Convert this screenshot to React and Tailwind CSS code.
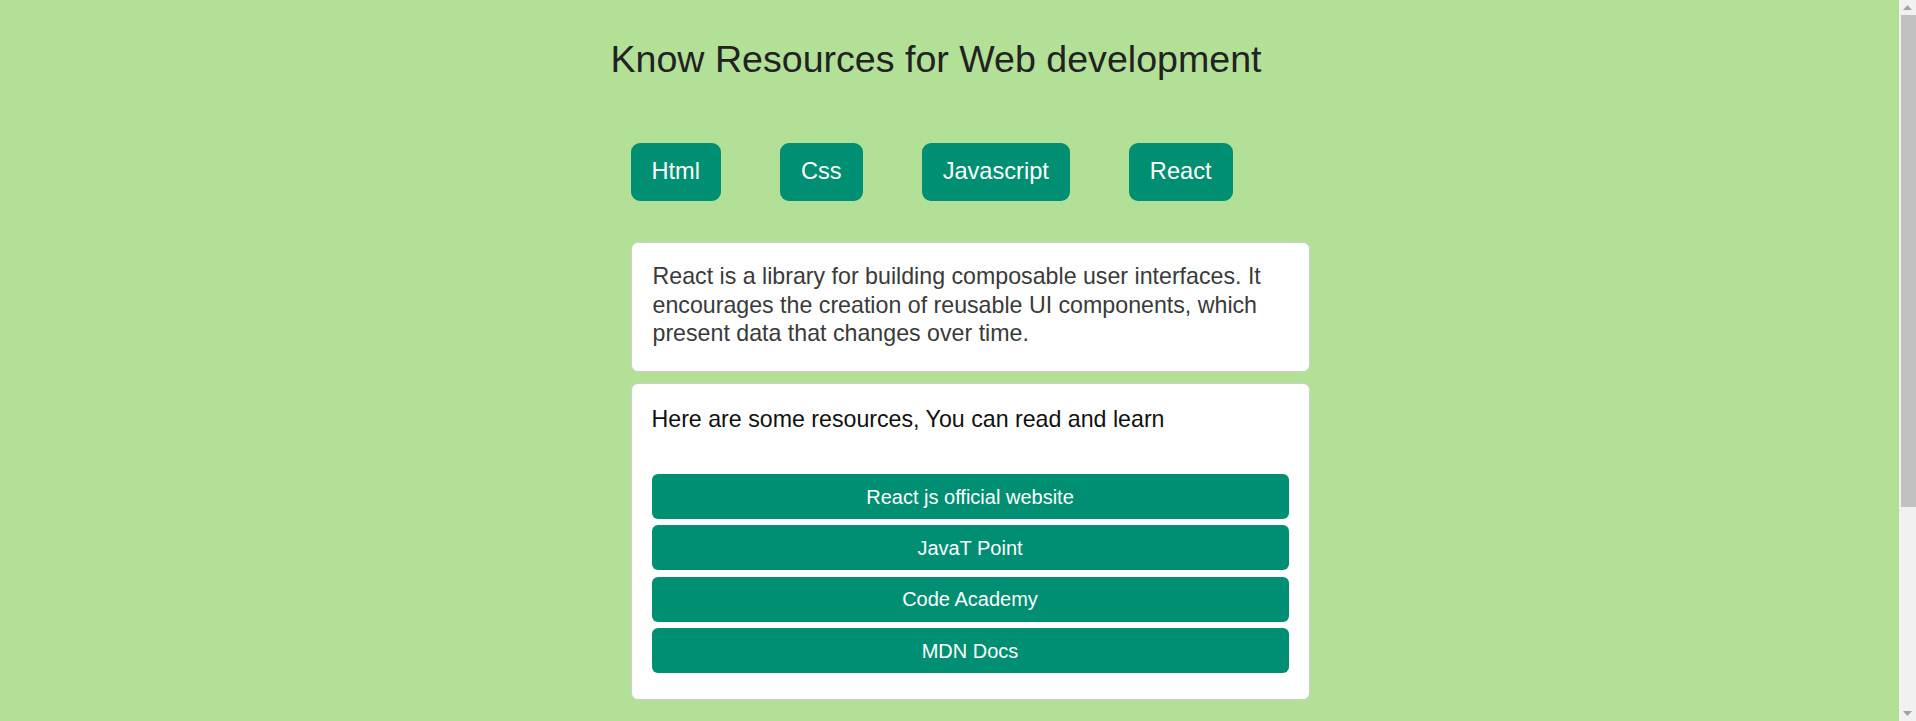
import React from 'react';

const topics = ['Html', 'Css', 'Javascript', 'React'];

const links = [
  'React js official website',
  'JavaT Point',
  'Code Academy',
  'MDN Docs',
];

const Scrollbar = () => (
  <div className="w-[17px] shrink-0 h-[721px] bg-[#f1f1f1] flex flex-col items-end">
    <div className="w-full h-[15px] flex items-center justify-center">
      <svg width="9" height="5" viewBox="0 0 9 5">
        <path d="M4.5 0 L9 5 L0 5 Z" fill="#a3a3a3" />
      </svg>
    </div>
    <div className="w-[15px] h-[492px] bg-[#c1c1c1]" />
    <div className="flex-1" />
    <div className="w-full h-[15px] flex items-center justify-center">
      <svg width="9" height="5" viewBox="0 0 9 5">
        <path d="M0 0 L9 0 L4.5 5 Z" fill="#a3a3a3" />
      </svg>
    </div>
  </div>
);

const App = () => {
  return (
    <div className="flex h-[721px] overflow-hidden bg-[#b3e097] font-['Liberation_Sans',Arial,sans-serif]">
      <div className="flex-1">
        <div className="ml-[600px] w-[672px] pt-[38px]">
          {/* Title */}
          <h1 className="text-center text-[37.6px] leading-[43px] font-normal text-[#222]">
            Know Resources for Web development
          </h1>

          {/* Topic buttons */}
          <div className="mt-[62px] flex gap-[59px] pl-[30.5px]">
            {topics.map((t) => (
              <button
                key={t}
                className="h-[57.5px] px-[21px] rounded-[9px] bg-[#008f72] text-white text-[23.6px] leading-none"
              >
                {t}
              </button>
            ))}
          </div>

          {/* Cards */}
          <div className="ml-[30.5px] w-[679px] mt-[41.5px] flex flex-col gap-[11px]">
            <div className="bg-white border border-[#cfcfcf] rounded-[7px] px-[21px] pt-[19px] pb-[23px]">
              <p className="text-[23.2px] leading-[28.7px] text-[#3a3a3a]">
                React is a library for building composable user interfaces. It
                encourages the creation of reusable UI components, which present
                data that changes over time.
              </p>
            </div>

            <div className="bg-white border border-[#cfcfcf] rounded-[7px] px-[20px] pt-[22px] pb-[25.5px]">
              <h2 className="text-[23.2px] leading-[26.7px] text-[#111]">
                Here are some resources, You can read and learn
              </h2>
              <div className="mt-[41.3px] flex flex-col gap-[6.3px]">
                {links.map((l) => (
                  <a
                    key={l}
                    href="#"
                    className="h-[45px] flex items-center justify-center rounded-[6px] bg-[#008f72] text-white text-[20px]"
                  >
                    {l}
                  </a>
                ))}
              </div>
            </div>
          </div>
        </div>
      </div>
      <Scrollbar />
    </div>
  );
};

export default App;
